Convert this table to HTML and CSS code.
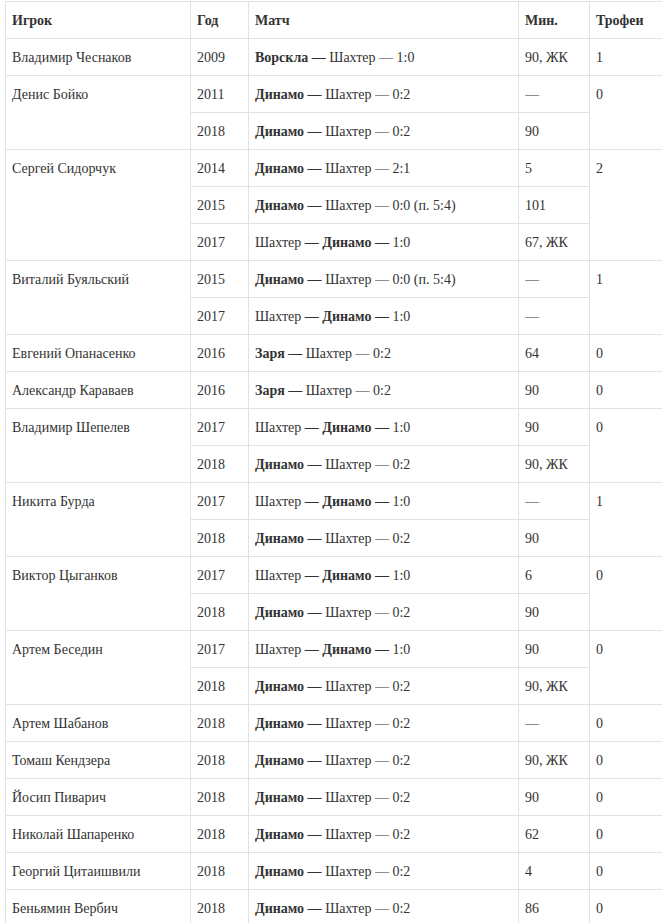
FILE: index.html
```html
<!DOCTYPE html>
<html lang="ru">
<head>
<meta charset="utf-8">
<link rel="stylesheet" href="styles.css">
</head>
<body>
<table class="stats">
<colgroup>
<col class="c-player"><col class="c-year"><col class="c-match"><col class="c-min"><col class="c-trophy">
</colgroup>
<thead>
<tr><th>Игрок</th><th>Год</th><th>Матч</th><th>Мин.</th><th>Трофеи</th></tr>
</thead>
<tbody>
<tr><td>Владимир Чеснаков</td><td>2009</td><td><b>Ворскла —</b> Шахтер — 1:0</td><td>90, ЖК</td><td>1</td></tr>
<tr><td rowspan="2">Денис Бойко</td><td>2011</td><td><b>Динамо —</b> Шахтер — 0:2</td><td>—</td><td rowspan="2">0</td></tr>
<tr><td>2018</td><td><b>Динамо —</b> Шахтер — 0:2</td><td>90</td></tr>
<tr><td rowspan="3">Сергей Сидорчук</td><td>2014</td><td><b>Динамо —</b> Шахтер — 2:1</td><td>5</td><td rowspan="3">2</td></tr>
<tr><td>2015</td><td><b>Динамо —</b> Шахтер — 0:0 (п. 5:4)</td><td>101</td></tr>
<tr><td>2017</td><td>Шахтер <b>— Динамо —</b> 1:0</td><td>67, ЖК</td></tr>
<tr><td rowspan="2">Виталий Буяльский</td><td>2015</td><td><b>Динамо —</b> Шахтер — 0:0 (п. 5:4)</td><td>—</td><td rowspan="2">1</td></tr>
<tr><td>2017</td><td>Шахтер <b>— Динамо —</b> 1:0</td><td>—</td></tr>
<tr><td>Евгений Опанасенко</td><td>2016</td><td><b>Заря —</b> Шахтер — 0:2</td><td>64</td><td>0</td></tr>
<tr><td>Александр Караваев</td><td>2016</td><td><b>Заря —</b> Шахтер — 0:2</td><td>90</td><td>0</td></tr>
<tr><td rowspan="2">Владимир Шепелев</td><td>2017</td><td>Шахтер <b>— Динамо —</b> 1:0</td><td>90</td><td rowspan="2">0</td></tr>
<tr><td>2018</td><td><b>Динамо —</b> Шахтер — 0:2</td><td>90, ЖК</td></tr>
<tr><td rowspan="2">Никита Бурда</td><td>2017</td><td>Шахтер <b>— Динамо —</b> 1:0</td><td>—</td><td rowspan="2">1</td></tr>
<tr><td>2018</td><td><b>Динамо —</b> Шахтер — 0:2</td><td>90</td></tr>
<tr><td rowspan="2">Виктор Цыганков</td><td>2017</td><td>Шахтер <b>— Динамо —</b> 1:0</td><td>6</td><td rowspan="2">0</td></tr>
<tr><td>2018</td><td><b>Динамо —</b> Шахтер — 0:2</td><td>90</td></tr>
<tr><td rowspan="2">Артем Беседин</td><td>2017</td><td>Шахтер <b>— Динамо —</b> 1:0</td><td>90</td><td rowspan="2">0</td></tr>
<tr><td>2018</td><td><b>Динамо —</b> Шахтер — 0:2</td><td>90, ЖК</td></tr>
<tr><td>Артем Шабанов</td><td>2018</td><td><b>Динамо —</b> Шахтер — 0:2</td><td>—</td><td>0</td></tr>
<tr><td>Томаш Кендзера</td><td>2018</td><td><b>Динамо —</b> Шахтер — 0:2</td><td>90, ЖК</td><td>0</td></tr>
<tr><td>Йосип Пиварич</td><td>2018</td><td><b>Динамо —</b> Шахтер — 0:2</td><td>90</td><td>0</td></tr>
<tr><td>Николай Шапаренко</td><td>2018</td><td><b>Динамо —</b> Шахтер — 0:2</td><td>62</td><td>0</td></tr>
<tr><td>Георгий Цитаишвили</td><td>2018</td><td><b>Динамо —</b> Шахтер — 0:2</td><td>4</td><td>0</td></tr>
<tr><td>Беньямин Вербич</td><td>2018</td><td><b>Динамо —</b> Шахтер — 0:2</td><td>86</td><td>0</td></tr>
</tbody>
</table>
</body>
</html>
```
FILE: styles.css
```css
html, body {
  margin: 0;
  padding: 0;
  background: #fff;
  overflow: hidden;
}
body {
  font-family: "Liberation Serif", "Times New Roman", serif;
  font-size: 14px;
  color: #333;
}
.stats {
  border-collapse: collapse;
  table-layout: fixed;
  width: 659px;
  margin: 1px 0 0 5px;
}
.c-player { width: 185px; }
.c-year { width: 58px; }
.c-match { width: 270px; }
.c-min { width: 71px; }
.c-trophy { width: 75px; }
.stats th,
.stats td {
  border: 1px solid #e2e2e2;
  padding: 11px 6px 9px;
  text-align: left;
  vertical-align: top;
  line-height: 16px;
  white-space: nowrap;
}
.stats th {
  font-weight: bold;
}
.stats b {
  font-weight: bold;
}
```
